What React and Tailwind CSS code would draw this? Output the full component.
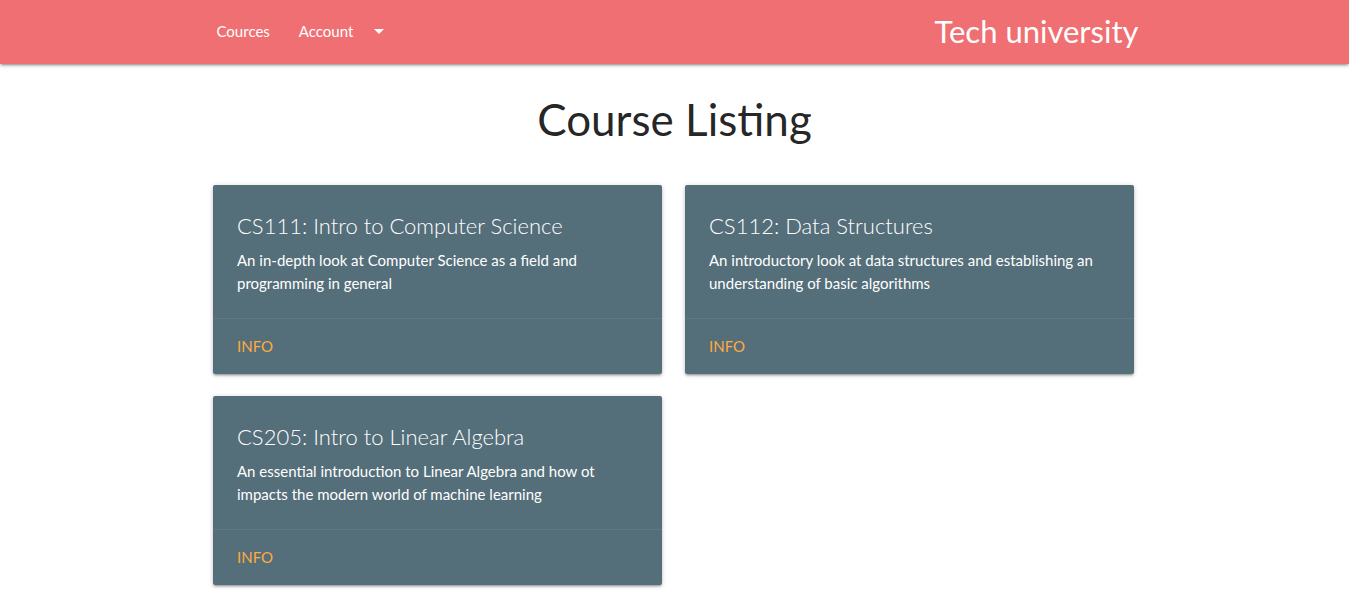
import React from "react";

const courses = [
  {
    title: "CS111: Intro to Computer Science",
    desc: "An in-depth look at Computer Science as a field and programming in general",
  },
  {
    title: "CS112: Data Structures",
    desc: "An introductory look at data structures and establishing an understanding of basic algorithms",
  },
  {
    title: "CS205: Intro to Linear Algebra",
    desc: "An essential introduction to Linear Algebra and how ot impacts the modern world of machine learning",
  },
];

function Card({ title, desc }) {
  return (
    <div className="bg-[#546e7a] text-white rounded-[2px] shadow-[0_2px_2px_0_rgba(0,0,0,0.14),0_3px_1px_-2px_rgba(0,0,0,0.12),0_1px_5px_0_rgba(0,0,0,0.2)]">
      <div className="p-6 h-[133px]">
        <div className="text-[22px] font-light leading-[32px] mb-2 translate-y-[1px]">{title}</div>
        <p className="text-[15px] leading-[22.5px] pr-2">{desc}</p>
      </div>
      <div className="border-t border-[rgba(160,160,160,0.2)] px-6 pt-4 pb-[17px]">
        <a className="block text-[#ffab40] text-[15px] leading-[22px] uppercase">Info</a>
      </div>
    </div>
  );
}

export default function App() {
  return (
    <div className="min-h-[611px] bg-white" style={{ fontFamily: 'Lato, "Open Sans", sans-serif' }}>
      <nav className="h-16 bg-[#ef6f73] text-white shadow-[0_2px_2px_0_rgba(0,0,0,0.14),0_3px_1px_-2px_rgba(0,0,0,0.12),0_1px_5px_0_rgba(0,0,0,0.2)]">
        <div className="w-[944px] mx-auto h-full flex items-center justify-between pb-[2px]">
          <ul className="flex items-center h-full text-[15px]">
            <li className="px-[14px]">Cources</li>
            <li className="px-[15px] flex items-center">
              Account
              <svg className="ml-[14px]" width="24" height="24" viewBox="0 0 24 24" fill="white">
                <path d="M7 10l5 5 5-5z" />
              </svg>
            </li>
          </ul>
          <div className="text-[31px] mr-2">Tech university</div>
        </div>
      </nav>
      <h1 className="text-center text-[44px] leading-[56px] text-[rgba(0,0,0,0.87)] pt-[27px] mb-[38px]">
        Course Listing
      </h1>
      <div className="w-[921px] mx-auto grid grid-cols-2 gap-x-[23px] gap-y-[22px] translate-x-[-1px]">
        {courses.map((c) => (
          <Card key={c.title} {...c} />
        ))}
      </div>
    </div>
  );
}
